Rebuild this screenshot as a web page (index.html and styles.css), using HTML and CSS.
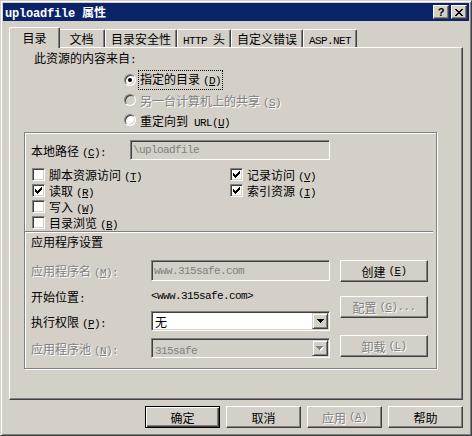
FILE: index.html
```html
<!DOCTYPE html>
<html lang="zh-CN">
<head>
    <meta charset="UTF-8">
    <title>uploadfile 属性</title>
    <link rel="stylesheet" href="styles.css">
</head>
<body>
<div class="dialog">
    <div class="titlebar">
        <span class="caption"><span class="en">uploadfile </span>属性</span>
        <span class="cap-btn">?</span>
        <span class="cap-btn">
            <svg width="8" height="7" viewBox="0 0 8 7" shape-rendering="crispEdges"><path d="M0 0h2v1H0zM6 0h2v1H6zM1 1h2v1H1zM5 1h2v1H5zM2 2h4v1H2zM3 3h2v1H3zM2 4h4v1H2zM1 5h2v1H1zM5 5h2v1H5zM0 6h2v1H0zM6 6h2v1H6z"/></svg>
        </span>
    </div>

    <div class="tabs">
        <span class="tab active">目录</span>
        <span class="tab">文档</span>
        <span class="tab">目录安全性</span>
        <span class="tab"><span class="en">HTTP </span>头</span>
        <span class="tab">自定义错误</span>
        <span class="tab"><span class="en">ASP.NET</span></span>
    </div>

    <div class="panel">
        <p class="lead">此资源的内容来自<span class="en">:</span></p>

        <div class="radios">
            <label class="opt"><span class="radio on"></span><span class="focus">指定的目录<span class="en"> (<u>D</u>)</span></span></label>
            <label class="opt off"><span class="radio dis"></span><span>另一台计算机上的共享<span class="en"> (<u>S</u>)</span></span></label>
            <label class="opt"><span class="radio"></span><span>重定向到<span class="en url"> URL(<u>U</u>)</span></span></label>
        </div>

        <div class="group">
            <div class="path-row">
                <span class="path-lbl">本地路径<span class="en"> (<u>C</u>):</span></span>
                <span class="field w-path"><span class="en">\uploadfile</span></span>
            </div>

            <div class="checks">
                <div class="col">
                    <label class="chk-row"><span class="chk"></span><span>脚本资源访问<span class="en"> (<u>T</u>)</span></span></label>
                    <label class="chk-row"><span class="chk"><svg width="7" height="7" viewBox="0 0 7 7" shape-rendering="crispEdges"><path d="M0 2h1v3H0zM1 3h1v3H1zM2 4h1v3H2zM3 3h1v3H3zM4 2h1v3H4zM5 1h1v3H5zM6 0h1v3H6z"/></svg></span><span>读取<span class="en"> (<u>R</u>)</span></span></label>
                    <label class="chk-row"><span class="chk"></span><span>写入<span class="en"> (<u>W</u>)</span></span></label>
                    <label class="chk-row"><span class="chk"></span><span>目录浏览<span class="en"> (<u>B</u>)</span></span></label>
                </div>
                <div class="col">
                    <label class="chk-row"><span class="chk"><svg width="7" height="7" viewBox="0 0 7 7" shape-rendering="crispEdges"><path d="M0 2h1v3H0zM1 3h1v3H1zM2 4h1v3H2zM3 3h1v3H3zM4 2h1v3H4zM5 1h1v3H5zM6 0h1v3H6z"/></svg></span><span>记录访问<span class="en"> (<u>V</u>)</span></span></label>
                    <label class="chk-row"><span class="chk"><svg width="7" height="7" viewBox="0 0 7 7" shape-rendering="crispEdges"><path d="M0 2h1v3H0zM1 3h1v3H1zM2 4h1v3H2zM3 3h1v3H3zM4 2h1v3H4zM5 1h1v3H5zM6 0h1v3H6z"/></svg></span><span>索引资源<span class="en"> (<u>I</u>)</span></span></label>
                </div>
            </div>

            <div class="sep"></div>
            <p class="sub">应用程序设置</p>

            <div class="app">
                <div class="app-fields">
                    <span class="off">应用程序名<span class="en"> (<u>M</u>):</span></span>
                    <span class="field w-app"><span class="en">www.315safe.com</span></span>

                    <span>开始位置<span class="en">:</span></span>
                    <span class="en">&lt;www.315safe.com&gt;</span>

                    <span>执行权限<span class="en"> (<u>P</u>):</span></span>
                    <span class="combo">
                        <span class="combo-text">无</span>
                        <span class="drop"><svg width="7" height="4" viewBox="0 0 7 4" shape-rendering="crispEdges"><path d="M0 0h7v1H0zM1 1h5v1H1zM2 2h3v1H2zM3 3h1v1H3z"/></svg></span>
                    </span>

                    <span class="off">应用程序池<span class="en"> (<u>N</u>):</span></span>
                    <span class="combo dis">
                        <span class="combo-text"><span class="en">315safe</span></span>
                        <span class="drop"><svg width="8" height="5" viewBox="0 0 8 5" shape-rendering="crispEdges"><path fill="#fff" d="M1 1h7v1H1zM2 2h5v1H2zM3 3h3v1H3zM4 4h1v1H4z"/><path fill="#808080" d="M0 0h7v1H0zM1 1h5v1H1zM2 2h3v1H2zM3 3h1v1H3z"/></svg></span>
                    </span>
                </div>

                <div class="app-btns">
                    <span class="btn wide">创建<span class="en"> (<u>E</u>)</span></span>
                    <span class="btn wide off">配置<span class="en"> (<u>G</u>)...</span></span>
                    <span class="btn wide off last">卸载<span class="en"> (<u>L</u>)</span></span>
                </div>
            </div>
        </div>
    </div>

    <div class="actions">
        <span class="btn default">确定</span>
        <span class="btn">取消</span>
        <span class="btn off">应用<span class="en"> (<u>A</u>)</span></span>
        <span class="btn">帮助</span>
    </div>
</div>
</body>
</html>
```

FILE: styles.css
```css
/* Classic grey dialog: 3D edges are drawn with a 1px border plus inset shadows */
* {
    box-sizing: border-box;
}

body {
    margin: 0;
    background: #d4d0c8;
    color: #000;
    font-family: "Noto Sans CJK SC", "Noto Sans CJK JP", sans-serif;
    font-size: 12px;
}

p {
    margin: 0;
}

/* latin runs are half-width; the space before an accelerator is kept narrow */
.en {
    font-family: "Liberation Mono", monospace;
    font-size: 11px;
    letter-spacing: -0.6px;
    word-spacing: -3px;
    white-space: pre;
}
.titlebar .en,
.tab .en,
.en.url {
    word-spacing: 0;
}

u {
    text-decoration: underline;
}

.off {
    color: #808080;
    text-shadow: 1px 1px #fff;
}

.dialog {
    width: 472px;
    height: 436px;
    display: flex;
    flex-direction: column;
    padding: 2px;
    background: #d4d0c8;
    border: 1px solid;
    border-color: #d4d0c8 #404040 #404040 #d4d0c8;
    box-shadow: inset 1px 1px #fff, inset -1px -1px #808080;
}

/* title bar */
.titlebar {
    height: 18px;
    display: flex;
    align-items: center;
    padding: 0 2px;
    background: #0a246a;
    color: #fff;
    font-weight: bold;
}
.titlebar .en {
    font-size: 12px;
    letter-spacing: -0.2px;
}
.cap-btn {
    width: 16px;
    height: 14px;
    display: flex;
    align-items: center;
    justify-content: center;
    background: #d4d0c8;
    color: #000;
    font: bold 11px "Liberation Sans", sans-serif;
    border: 1px solid;
    border-color: #fff #404040 #404040 #fff;
    box-shadow: inset -1px -1px #808080;
}
.caption + .cap-btn {
    margin-left: auto;
}
.cap-btn + .cap-btn {
    margin-left: 2px;
}

/* tab strip */
.tabs {
    height: 20px;
    display: flex;
    align-items: flex-end;
    margin: 6px 6px 0;
    padding-left: 2px;
    position: relative;
    z-index: 1;
}
.tab {
    height: 18px;
    min-width: 47px;
    padding: 2px 5px 0;
    line-height: 14px;
    text-align: center;
    white-space: nowrap;
    background: #d4d0c8;
    border: 1px solid #fff;
    border-right-color: #404040;
    border-bottom: 0;
    border-radius: 2px 2px 0 0;
    box-shadow: inset -1px 0 #808080;
}
.tab.active {
    height: 21px;
    min-width: 51px;
    margin: 0 -2px -1px;
    padding: 3px 7px 0;
    position: relative;
    z-index: 1;
}

.panel {
    flex: 1;
    margin: 0 6px;
    padding: 2px 25px 0 14px;
    border: 1px solid;
    border-color: #fff #404040 #404040 #fff;
    box-shadow: inset -1px -1px #808080;
}

.lead {
    margin-left: 10px;
    line-height: 16px;
}

/* radio buttons */
.radios {
    margin: 2px 0 0 100px;
}
.opt {
    height: 20px;
    display: flex;
    align-items: center;
    gap: 4px;
}
.radio {
    width: 12px;
    height: 12px;
    flex: none;
    display: flex;
    align-items: center;
    justify-content: center;
    border-radius: 50%;
    background: #fff;
    border: 1px solid;
    border-color: #808080 #fff #fff #808080;
    box-shadow: inset 1px 1px #404040, inset -1px -1px #d4d0c8;
}
.radio.dis {
    background: #d4d0c8;
}
.radio.on::after {
    content: "";
    width: 4px;
    height: 4px;
    border-radius: 50%;
    background: #000;
}
.focus {
    margin-left: -1px;
    padding: 0 1px;
    line-height: 15px;
    outline: 1px dotted #000;
}

/* group box with etched edge */
.group {
    margin-top: 2px;
    height: 237px;
    padding: 7px 8px 10px 6px;
    border: 1px solid #808080;
    box-shadow: inset 1px 1px #fff, 1px 1px #fff;
}

.path-row {
    height: 20px;
    display: flex;
    align-items: center;
}
.path-lbl {
    width: 99px;
}

.field {
    height: 20px;
    display: flex;
    align-items: center;
    padding: 0 2px;
    background: #d4d0c8;
    color: #808080;
    border: 1px solid;
    border-color: #808080 #fff #fff #808080;
    box-shadow: inset 1px 1px #404040, inset -1px -1px #d4d0c8;
    white-space: nowrap;
}
.w-path {
    width: 200px;
}
.w-app {
    width: 179px;
    height: 21px;
}

.checks {
    display: flex;
    margin: 6px 0 0 1px;
}
.col {
    width: 200px;
}
.chk-row {
    height: 16px;
    display: flex;
    align-items: center;
    gap: 4px;
}
.chk {
    width: 13px;
    height: 13px;
    flex: none;
    display: flex;
    align-items: center;
    justify-content: center;
    background: #fff;
    border: 1px solid;
    border-color: #808080 #fff #fff #808080;
    box-shadow: inset 1px 1px #404040, inset -1px -1px #d4d0c8;
}

.sep {
    height: 2px;
    margin: 1px -5px 0 -6px;
    border-top: 1px solid #808080;
    border-bottom: 1px solid #fff;
}
.sub {
    margin-top: 1px;
    line-height: 16px;
}

/* application settings: labels + fields on the left, buttons on the right */
.app {
    display: flex;
    gap: 10px;
    margin-top: 10px;
}
.app-fields {
    display: grid;
    grid-template-columns: 120px 179px;
    grid-template-rows: 21px 16px 20px 20px;
    row-gap: 7px;
    align-items: center;
    white-space: nowrap;
}

.combo {
    height: 20px;
    display: flex;
    align-items: center;
    padding: 1px;
    background: #fff;
    border: 1px solid;
    border-color: #808080 #fff #fff #808080;
    box-shadow: inset 1px 1px #404040, inset -1px -1px #d4d0c8;
}
.combo.dis {
    background: #d4d0c8;
    color: #808080;
}
.combo-text {
    flex: 1;
    padding-left: 2px;
}
.drop {
    width: 16px;
    height: 16px;
    display: flex;
    align-items: center;
    justify-content: center;
    background: #d4d0c8;
    border: 1px solid;
    border-color: #d4d0c8 #404040 #404040 #d4d0c8;
    box-shadow: inset 1px 1px #fff, inset -1px -1px #808080;
}

.app-btns {
    display: flex;
    flex-direction: column;
    gap: 14px;
}
.app-btns .last {
    margin-top: 3px;
}

/* push buttons */
.btn {
    width: 75px;
    height: 22px;
    display: flex;
    align-items: center;
    justify-content: center;
    background: #d4d0c8;
    white-space: nowrap;
    border: 1px solid;
    border-color: #fff #404040 #404040 #fff;
    box-shadow: inset -1px -1px #808080;
}
.btn.wide {
    width: 88px;
}
.btn.default {
    border-color: #000;
    box-shadow: inset 1px 1px #fff, inset -1px -1px #404040, inset -2px -2px #808080;
}

.actions {
    display: flex;
    justify-content: flex-end;
    gap: 6px;
    margin: 6px 6px 5px;
}
```
